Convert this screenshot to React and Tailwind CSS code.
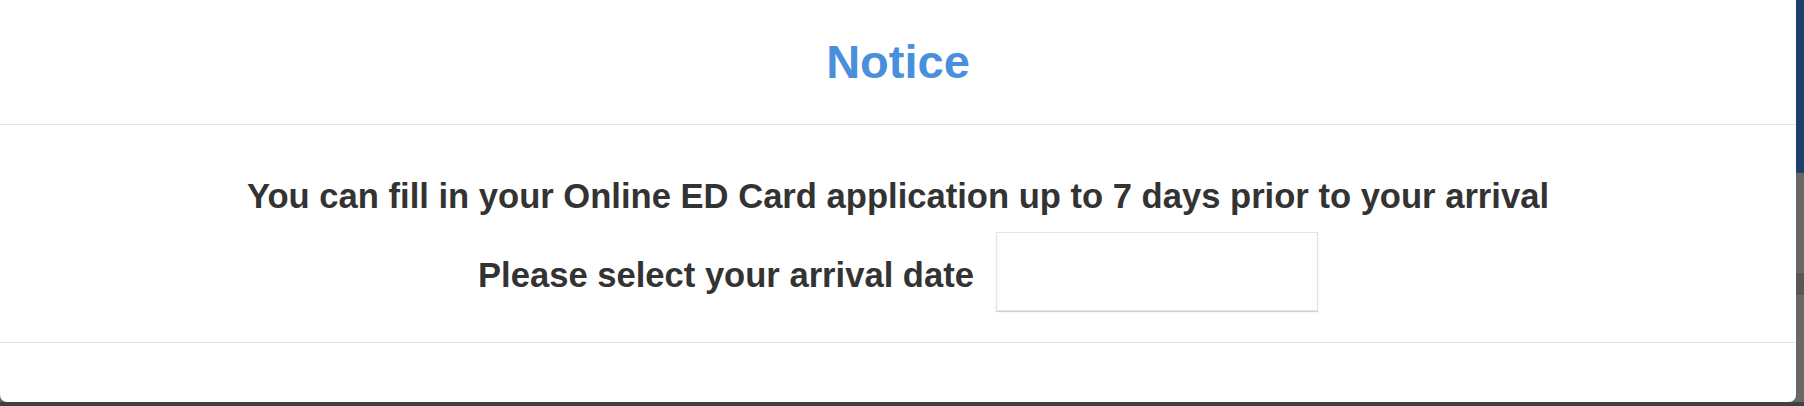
import React from "react";

const font = { fontFamily: '"Liberation Sans", Arial, Helvetica, sans-serif' };

const NoticeModal = () => {
  return (
    <div className="w-[1796px] h-[402px] bg-white rounded-b-[7px] flex flex-col overflow-hidden">
      <div className="h-[125px] pt-[35px] border-b border-[#e2e2e2] flex justify-center">
        <h4 className="text-[47px] leading-[54px] font-bold text-[#4a8fdc]">Notice</h4>
      </div>
      <div className="pt-[51px] pb-[31px] border-b border-[#e2e2e2] flex flex-col items-center text-[#333333]">
        <p className="text-[34.6px] leading-[40px] font-bold">
          You can fill in your Online ED Card application up to 7 days prior to your arrival
        </p>
        <div className="mt-[16px] flex items-center">
          <label htmlFor="arrival" className="text-[34.6px] leading-[40px] font-bold pt-[6px]">
            Please select your arrival date
          </label>
          <input
            id="arrival"
            type="text"
            className="ml-[22px] w-[322px] h-[79px] border border-[#e4e4e4] shadow-[0_1px_1px_rgba(0,0,0,0.18)] outline-none bg-white"
          />
        </div>
      </div>
      <div className="flex-1" />
    </div>
  );
};

export default function App() {
  return (
    <div className="w-[1804px] h-[406px] bg-[#404040] flex flex-col overflow-hidden" style={font}>
      <div className="flex h-[402px] bg-[#676767]">
        <NoticeModal />
        <div className="w-[8px] flex flex-col">
          <div className="h-[173px] bg-[#1c406a]" />
          <div className="h-[100px] bg-[#686868]" />
          <div className="h-[22px] bg-[#575757]" />
          <div className="flex-1 bg-[#686868]" />
        </div>
      </div>
    </div>
  );
}
